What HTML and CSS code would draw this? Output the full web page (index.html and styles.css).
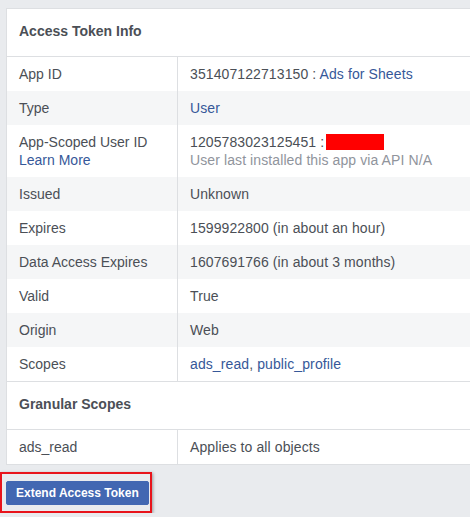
FILE: index.html
```html
<!DOCTYPE html>
<html>
<head>
<meta charset="utf-8">
<link rel="stylesheet" href="styles.css">
</head>
<body>
<div class="page">
  <div class="panel">
    <div class="section-head">Access Token Info</div>
    <div class="row"><div class="key">App ID</div><div class="val">351407122713150 : <a class="link">Ads for Sheets</a></div></div>
    <div class="row alt"><div class="key">Type</div><div class="val"><a class="link">User</a></div></div>
    <div class="row"><div class="key">App-Scoped User ID<br><a class="link">Learn More</a></div><div class="val">1205783023125451 : <span class="redact"></span><br><span class="muted">User last installed this app via API N/A</span></div></div>
    <div class="row alt"><div class="key">Issued</div><div class="val">Unknown</div></div>
    <div class="row"><div class="key">Expires</div><div class="val">1599922800 (in about an hour)</div></div>
    <div class="row alt"><div class="key">Data Access Expires</div><div class="val">1607691766 (in about 3 months)</div></div>
    <div class="row"><div class="key">Valid</div><div class="val">True</div></div>
    <div class="row alt"><div class="key">Origin</div><div class="val">Web</div></div>
    <div class="row"><div class="key">Scopes</div><div class="val"><a class="link">ads_read</a>, <a class="link">public_profile</a></div></div>
    <div class="section-head sub">Granular Scopes</div>
    <div class="row"><div class="key">ads_read</div><div class="val">Applies to all objects</div></div>
  </div>
  <div class="highlight"><button class="btn">Extend Access Token</button></div>
</div>
</body>
</html>
```
FILE: styles.css
```css
html, body {
  margin: 0;
  padding: 0;
  background: #e9ebee;
  overflow: hidden;
}
body {
  font-family: "Liberation Sans", Arial, Helvetica, sans-serif;
  font-size: 14px;
  line-height: 18px;
  color: #4b4f56;
}
.page {
  padding-top: 8px;
}
.panel {
  margin-left: 6px;
  background: #fff;
  border: 1px solid #dddfe2;
  border-right: none;
}
.section-head {
  font-weight: bold;
  padding: 13px 12px 16px;
  border-bottom: 1px solid #dddfe2;
}
.section-head.sub {
  border-top: 1px solid #dddfe2;
}
.row {
  display: grid;
  grid-template-columns: 170px 1fr;
  background: #fff;
}
.row.alt {
  background: #f5f6f7;
}
.key {
  padding: 8px 12px;
}
.val {
  padding: 8px 12px;
  border-left: 1px solid #dddfe2;
  letter-spacing: 0.1px;
}
.link {
  color: #365899;
  text-decoration: none;
  cursor: pointer;
}
.muted {
  color: #90949c;
}
.redact {
  display: inline-block;
  width: 58px;
  height: 16px;
  background: #ff0000;
  vertical-align: -3px;
  margin-left: -2px;
}
.highlight {
  display: inline-block;
  margin-top: 7px;
  border: 2px solid #e8141b;
  padding: 7px 1px 6px 4px;
  box-shadow: 1px 1px 3px rgba(0, 0, 0, 0.35);
}
.btn {
  display: block;
  height: 24px;
  margin: 0;
  padding: 0 9px;
  background: #4267b2;
  border: 1px solid #4267b2;
  border-radius: 2px;
  color: #fff;
  font-family: "Liberation Sans", Arial, Helvetica, sans-serif;
  font-weight: bold;
  font-size: 12px;
  line-height: 22px;
}
```
